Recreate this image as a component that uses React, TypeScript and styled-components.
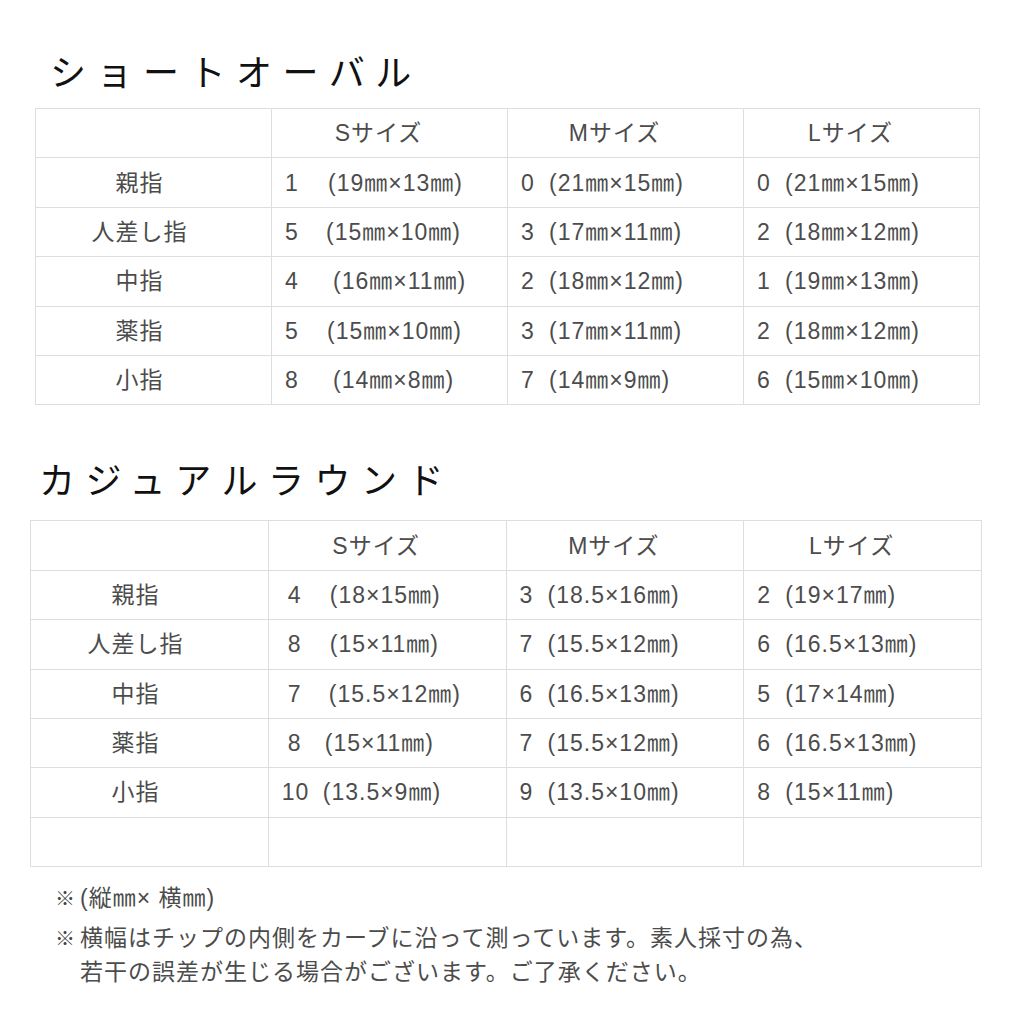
import React from "react";
import styled, { createGlobalStyle } from "styled-components";

const Global = createGlobalStyle`
  html, body { margin: 0; padding: 0; background: #ffffff; }
  body { font-family: "Liberation Sans", "Noto Sans CJK JP", sans-serif; }
`;

const Page = styled.div`
  width: 1024px;
  min-height: 1024px;
  padding-top: 48px;
  box-sizing: border-box;
  background: #fff;
`;

const Section = styled.section<{ $left: number; $titleLeft: number; $gap: number; $top: number }>`
  display: flex;
  flex-direction: column;
  gap: ${(p) => p.$gap}px;
  margin-top: ${(p) => p.$top}px;
  padding-left: ${(p) => p.$left}px;
  & > h2 {
    padding-left: ${(p) => p.$titleLeft - p.$left}px;
  }
`;

const Title = styled.h2`
  margin: 0;
  font-family: "Noto Sans CJK JP", sans-serif;
  font-weight: 400;
  font-size: 36px;
  line-height: 44px;
  letter-spacing: 10.5px;
  color: #111;
`;

const Grid = styled.div<{ $width: number }>`
  width: ${(p) => p.$width}px;
  box-sizing: border-box;
  display: grid;
  grid-template-columns: repeat(4, 1fr);
  border-top: 1px solid #dedede;
  border-left: 1px solid #dedede;
`;

const Cell = styled.div<{ $kind: "head" | "label" | "data" }>`
  height: 49.4px;
  box-sizing: border-box;
  border-right: 1px solid #dedede;
  border-bottom: 1px solid #dedede;
  display: flex;
  align-items: center;
  justify-content: ${(p) => (p.$kind === "data" ? "flex-start" : "center")};
  padding-left: ${(p) => (p.$kind === "data" ? "13px" : "0")};
  padding-right: ${(p) => (p.$kind === "head" ? "22px" : p.$kind === "label" ? "28px" : "0")};
  font-size: 23px;
  line-height: 26px;
  letter-spacing: 1px;
  color: #4c4c4c;
  white-space: nowrap;
`;

const Value = styled.span`
  display: block;
  line-height: 26px;
`;

const Num = styled.span<{ $width: number; $indent: number }>`
  display: inline-block;
  box-sizing: border-box;
  width: ${(p) => p.$width}px;
  padding-left: ${(p) => p.$indent}px;
`;

const Notes = styled.div`
  margin-top: 14px;
  padding-left: 55px;
  display: flex;
  flex-direction: column;
  gap: 6px;
  font-size: 23px;
  line-height: 34px;
  letter-spacing: 1px;
  color: #4c4c4c;
`;

const Note = styled.p`
  margin: 0;
  display: flex;
  align-items: flex-start;
`;

const Mark = styled.span`
  flex: 0 0 25px;
  height: 34px;
  display: flex;
  align-items: center;
  font-family: "Noto Sans CJK JP", sans-serif;
  font-size: 20px;
  font-weight: 700;
  letter-spacing: 0;
  color: #444;
`;

type D = [string, number, number, string];
type Row = { label: string; cells: D[] };

const headers = ["Sサイズ", "Mサイズ", "Lサイズ"];

const table1: Row[] = [
  { label: "親指", cells: [["1", 0, 43, "(19㎜×13㎜)"], ["0", 0, 28, "(21㎜×15㎜)"], ["0", 0, 28, "(21㎜×15㎜)"]] },
  { label: "人差し指", cells: [["5", 0, 41, "(15㎜×10㎜)"], ["3", 0, 28, "(17㎜×11㎜)"], ["2", 0, 28, "(18㎜×12㎜)"]] },
  { label: "中指", cells: [["4", 0, 48, "(16㎜×11㎜)"], ["2", 0, 28, "(18㎜×12㎜)"], ["1", 0, 28, "(19㎜×13㎜)"]] },
  { label: "薬指", cells: [["5", 0, 42, "(15㎜×10㎜)"], ["3", 0, 28, "(17㎜×11㎜)"], ["2", 0, 28, "(18㎜×12㎜)"]] },
  { label: "小指", cells: [["8", 0, 48, "(14㎜×8㎜)"], ["7", 0, 28, "(14㎜×9㎜)"], ["6", 0, 28, "(15㎜×10㎜)"]] },
];

const table2: Row[] = [
  { label: "親指", cells: [["4", 6, 48, "(18×15㎜)"], ["3", 0, 28, "(18.5×16㎜)"], ["2", 0, 28, "(19×17㎜)"]] },
  { label: "人差し指", cells: [["8", 6, 48, "(15×11㎜)"], ["7", 0, 28, "(15.5×12㎜)"], ["6", 0, 28, "(16.5×13㎜)"]] },
  { label: "中指", cells: [["7", 6, 47, "(15.5×12㎜)"], ["6", 0, 28, "(16.5×13㎜)"], ["5", 0, 28, "(17×14㎜)"]] },
  { label: "薬指", cells: [["8", 6, 43, "(15×11㎜)"], ["7", 0, 28, "(15.5×12㎜)"], ["6", 0, 28, "(16.5×13㎜)"]] },
  { label: "小指", cells: [["10", 0, 41, "(13.5×9㎜)"], ["9", 0, 28, "(13.5×10㎜)"], ["8", 0, 28, "(15×11㎜)"]] },
];

function SizeTable({ rows, width, blankRow }: { rows: Row[]; width: number; blankRow?: boolean }) {
  return (
    <Grid $width={width}>
      <Cell $kind="head" />
      {headers.map((h) => (
        <Cell key={h} $kind="head">
          <Value>{h}</Value>
        </Cell>
      ))}
      {rows.map((r) => (
        <React.Fragment key={r.label}>
          <Cell $kind="label">
            <Value>{r.label}</Value>
          </Cell>
          {r.cells.map(([n, indent, w, size], i) => (
            <Cell key={i} $kind="data">
              <Value>
                <Num $width={w} $indent={indent}>{n}</Num>
                {size}
              </Value>
            </Cell>
          ))}
        </React.Fragment>
      ))}
      {blankRow && [0, 1, 2, 3].map((i) => <Cell key={`b${i}`} $kind="data" />)}
    </Grid>
  );
}

export default function App() {
  return (
    <Page>
      <Global />
      <Section $left={35} $titleLeft={50} $gap={16} $top={0}>
        <Title>ショートオーバル</Title>
        <SizeTable rows={table1} width={945} />
      </Section>
      <Section $left={30} $titleLeft={39} $gap={20} $top={51}>
        <Title>カジュアルラウンド</Title>
        <SizeTable rows={table2} width={952} blankRow />
      </Section>
      <Notes>
        <Note>
          <Mark>※</Mark>
          <span>(縦㎜× 横㎜)</span>
        </Note>
        <Note>
          <Mark>※</Mark>
          <span>
            横幅はチップの内側をカーブに沿って測っています。素人採寸の為、
            <br />
            若干の誤差が生じる場合がございます。ご了承ください。
          </span>
        </Note>
      </Notes>
    </Page>
  );
}
